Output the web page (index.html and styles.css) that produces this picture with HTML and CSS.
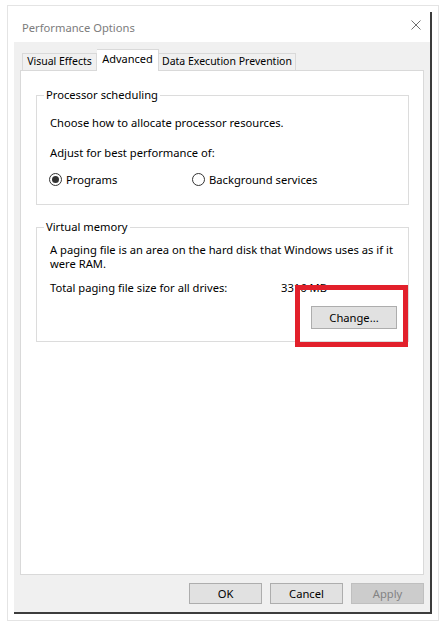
FILE: index.html
```html
<!DOCTYPE html>
<html>
<head>
    <title>Performance Options</title>
    <link rel="stylesheet" href="styles.css">
</head>
<body>
<div class="frame">
    <div class="window">
        <div class="titlebar">
            <span class="title">Performance Options</span>
            <svg class="close" width="10" height="10" viewBox="0 0 10 10">
                <path d="M0.5 0.5 L9.5 9.5 M9.5 0.5 L0.5 9.5" stroke="#707070" stroke-width="1" fill="none"/>
            </svg>
        </div>

        <div class="dialog-body">
            <div class="tabs">
                <div class="tab tab-effects">Visual Effects</div>
                <div class="tab tab-advanced active">Advanced</div>
                <div class="tab tab-dep">Data Execution Prevention</div>
            </div>

            <div class="panel">
                <fieldset class="group group-cpu">
                    <legend>Processor scheduling</legend>
                    <p class="line">Choose how to allocate processor resources.</p>
                    <p class="line line-adjust">Adjust for best performance of:</p>
                    <div class="radios">
                        <label class="radio radio-programs"><span class="radio-mark checked"></span>Programs</label>
                        <label class="radio"><span class="radio-mark"></span>Background services</label>
                    </div>
                </fieldset>

                <fieldset class="group group-vm">
                    <legend>Virtual memory</legend>
                    <p class="line line-wrap">A paging file is an area on the hard disk that Windows uses as if it were RAM.</p>
                    <div class="total">
                        <span class="total-label">Total paging file size for all drives:</span>
                        <span>3316 MB</span>
                    </div>
                    <div class="change-row">
                        <button class="btn btn-change">Change...</button>
                    </div>
                </fieldset>

                <div class="highlight"></div>
            </div>

            <div class="actions">
                <button class="btn">OK</button>
                <button class="btn">Cancel</button>
                <button class="btn disabled">Apply</button>
            </div>
        </div>
    </div>
</div>
</body>
</html>
```

FILE: styles.css
```css
body {
    margin: 0;
    background: #ffffff;
    font-family: "Noto Sans", "Open Sans", sans-serif;
    font-size: 11.2px;
    line-height: 15px;
    color: #000000;
}

.frame {
    box-sizing: border-box;
    width: 432px;
    height: 616px;
    margin: 5px 0 0 7px;
    border: 1px solid #e4e4e4;
    overflow: hidden;
}

.window {
    box-sizing: border-box;
    width: 418px;
    height: 602px;
    margin: 6px 0 0 6px;
    border-right: 2px solid #3c3c3c;
    border-bottom: 2px solid #3c3c3c;
    display: flex;
    flex-direction: column;
}

.titlebar {
    height: 30px;
    display: flex;
    align-items: center;
    justify-content: space-between;
    padding: 0 9px 0 8px;
    flex-shrink: 0;
}

.title {
    color: #7c7c7c;
}

.close {
    display: block;
    margin-top: -4px;
}

.dialog-body {
    flex: 1;
    background: #f0f0f0;
    padding: 7px 6px 8px 6px;
    display: flex;
    flex-direction: column;
}

.tabs {
    height: 21px;
    display: flex;
    align-items: flex-end;
    padding-left: 2px;
    flex-shrink: 0;
}

.tab {
    box-sizing: border-box;
    height: 17px;
    border: 1px solid #d9d9d9;
    border-bottom: none;
    background: #f0f0f0;
    text-align: center;
    white-space: nowrap;
    font-size: 10.5px;
    line-height: 15px;
}

.tab-effects {
    width: 75px;
}

.tab-advanced {
    width: 62px;
}

.tab-dep {
    width: 137px;
    border-left: none;
}

.tab.active {
    height: 22px;
    margin-bottom: -1px;
    padding-top: 1px;
    background: #ffffff;
    border-left: none;
    font-size: 11px;
    position: relative;
    z-index: 1;
}

.panel {
    flex: 1;
    background: #ffffff;
    border: 1px solid #d9d9d9;
    padding: 16px 14px 0 15px;
    position: relative;
}

.group {
    margin: 0;
    padding: 0 11px 0 13px;
    border: 1px solid #dcdcdc;
    min-width: 0;
}

.group legend {
    padding: 0 2px;
    margin-left: -6px;
    line-height: 16px;
}

.line {
    margin: 0;
}

.group-cpu {
    padding-top: 12px;
    padding-bottom: 17px;
}

.line-adjust {
    margin-top: 15px;
}

.radios {
    display: flex;
    margin-top: 12px;
    margin-left: -1px;
}

.radio {
    display: flex;
    align-items: center;
}

.radio-programs {
    width: 143px;
}

.radio-mark {
    box-sizing: border-box;
    width: 13px;
    height: 13px;
    border: 1px solid #333333;
    border-radius: 50%;
    background: #ffffff;
    margin-right: 4px;
    display: flex;
    align-items: center;
    justify-content: center;
}

.radio-mark.checked::after {
    content: "";
    width: 7px;
    height: 7px;
    border-radius: 50%;
    background: #333333;
}

.group-vm {
    margin-top: 14px;
    padding-top: 8px;
    padding-bottom: 12px;
}

.line-wrap {
    line-height: 14px;
}

.total {
    display: flex;
    margin-top: 9px;
}

.total-label {
    width: 231px;
}

.change-row {
    display: flex;
    justify-content: flex-end;
    margin-top: 11px;
}

.btn {
    box-sizing: border-box;
    width: 73px;
    height: 21px;
    padding: 0;
    border: 1px solid #adadad;
    background: #e1e1e1;
    font-family: inherit;
    font-size: 11.2px;
    color: #000000;
}

.btn-change {
    width: 86px;
    height: 23px;
}

.btn.disabled {
    background: #cccccc;
    border-color: #bfbfbf;
    color: #838383;
}

.actions {
    display: flex;
    justify-content: flex-end;
    gap: 8px;
    margin-top: 8px;
    flex-shrink: 0;
}

.highlight {
    position: absolute;
    left: 274px;
    top: 214px;
    width: 113px;
    height: 62px;
    box-sizing: border-box;
    border: 5px solid #e2202b;
}
```
